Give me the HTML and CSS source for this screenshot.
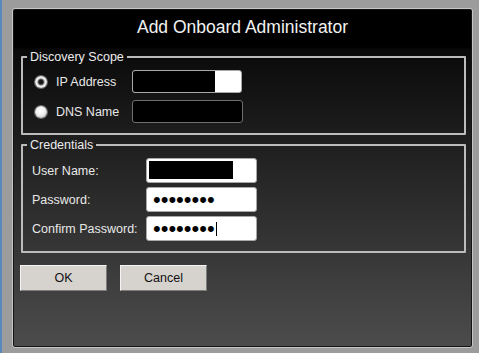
FILE: index.html
```html
<!DOCTYPE html>
<html lang="en">
<head>
  <meta charset="UTF-8">
  <title>Add Onboard Administrator</title>
  <link rel="stylesheet" href="styles.css">
</head>
<body>
  <div class="screen">
    <div class="dialog">
      <div class="title">Add Onboard Administrator</div>

      <fieldset class="group scope">
        <legend>Discovery Scope</legend>
        <div class="row">
          <input type="radio" name="scope" class="radio" checked>
          <label class="label">IP Address</label>
          <input type="text" class="field field-ip">
        </div>
        <div class="row">
          <input type="radio" name="scope" class="radio">
          <label class="label">DNS Name</label>
          <input type="text" class="field field-dark">
        </div>
      </fieldset>

      <fieldset class="group creds">
        <legend>Credentials</legend>
        <div class="row">
          <label class="label">User Name:</label>
          <input type="text" class="field field-user">
        </div>
        <div class="row">
          <label class="label">Password:</label>
          <input type="password" class="field field-pass" value="password">
        </div>
        <div class="row">
          <label class="label">Confirm Password:</label>
          <input type="password" class="field field-pass field-caret" value="password">
        </div>
      </fieldset>

      <div class="actions">
        <button class="btn">OK</button>
        <button class="btn">Cancel</button>
      </div>
    </div>
  </div>
</body>
</html>
```

FILE: styles.css
```css
html, body {
  margin: 0;
  padding: 0;
}
body {
  width: 479px;
  height: 353px;
  overflow: hidden;
  background-color: #9c9c9c;
  font-family: 'Liberation Sans', Arial, sans-serif;
}
.screen {
  box-sizing: border-box;
  height: 353px;
  padding: 8px 6px 5px 10px;
  border-left: 2px solid #5a88bd;
}
.dialog {
  box-sizing: border-box;
  height: 340px;
  border: 1px solid #c6c6c6;
  border-radius: 3px;
  box-shadow: inset 0 0 0 1px #141414;
  background: linear-gradient(to bottom, #000 0, #000 38px, #0a0a0a 41px, #4c4c4c 100%);
}
.title {
  height: 41px;
  line-height: 36px;
  text-align: center;
  color: #f2f2f2;
  font-size: 17.5px;
}
.group {
  margin: 0 6px 0 8px;
  border: 2px solid #bcbcbc;
  border-radius: 1px;
  color: #e8e8e8;
  font-size: 12.5px;
}
.group legend {
  height: 14px;
  line-height: 14px;
  padding: 0 3px;
  font-size: 12.5px;
  color: #ececec;
}
.row {
  display: flex;
  align-items: center;
}
.label {
  color: #e8e8e8;
}
.scope {
  padding: 6px 0 10px 12px;
}
.scope legend {
  margin-left: -8px;
}
.scope .row {
  height: 23px;
}
.scope .row + .row {
  margin-top: 7px;
}
.scope .label {
  width: 76px;
  margin-left: 9px;
}
.creds {
  margin-top: 3px;
  padding: 6px 0 10px 9px;
}
.creds legend {
  margin-left: -5px;
}
.creds .row {
  height: 25px;
}
.creds .row + .row {
  margin-top: 4px;
}
.creds .label {
  width: 114px;
}
.radio {
  appearance: none;
  -webkit-appearance: none;
  margin: 0;
  width: 12px;
  height: 12px;
  border-radius: 50%;
  background: radial-gradient(circle at 45% 40%, #ffffff 0, #f0f0f0 45%, #a8a8a8 100%);
  box-shadow: 0 0 0 1px #6a6a6a;
}
.radio:checked {
  background: radial-gradient(circle at 50% 50%, #1a1a1a 0, #1a1a1a 2px, #7a7a7a 3px, #e6e6e6 4px, #f4f4f4 5px, #a0a0a0 100%);
}
.field {
  box-sizing: border-box;
  margin: 0;
  width: 111px;
  height: 25px;
  padding: 0 6px;
  border: 1px solid #a8a8a8;
  border-radius: 3px;
  background-color: #fff;
  outline: none;
}
.field-ip {
  height: 23px;
  width: 110px;
  background: linear-gradient(#000, #000) no-repeat 0 0 / 82px 100%, #fff;
}
.field-dark {
  height: 23px;
  background-color: #000;
  border-color: #6e6e6e;
}
.field-user {
  background: linear-gradient(#000, #000) no-repeat 2px 2px / 84px 18px, #fff;
}
.field-pass {
  font-family: 'Liberation Sans', Arial, sans-serif;
  font-size: 22px;
  color: #000;
}
/* text cursor left after the last typed character */
.field-caret {
  background: linear-gradient(#000, #000) no-repeat 69px 5px / 1px 14px, #fff;
}
.actions {
  display: flex;
  gap: 13px;
  margin: 12px 0 0 7px;
}
.btn {
  box-sizing: border-box;
  width: 87px;
  height: 26px;
  padding: 0;
  border: 1px solid #9a9a9a;
  border-color: #f4f4f4 #7c7c7c #7c7c7c #f4f4f4;
  background-color: #d6d3ce;
  color: #111;
  font-family: 'Liberation Sans', Arial, sans-serif;
  font-size: 12.5px;
}
```
